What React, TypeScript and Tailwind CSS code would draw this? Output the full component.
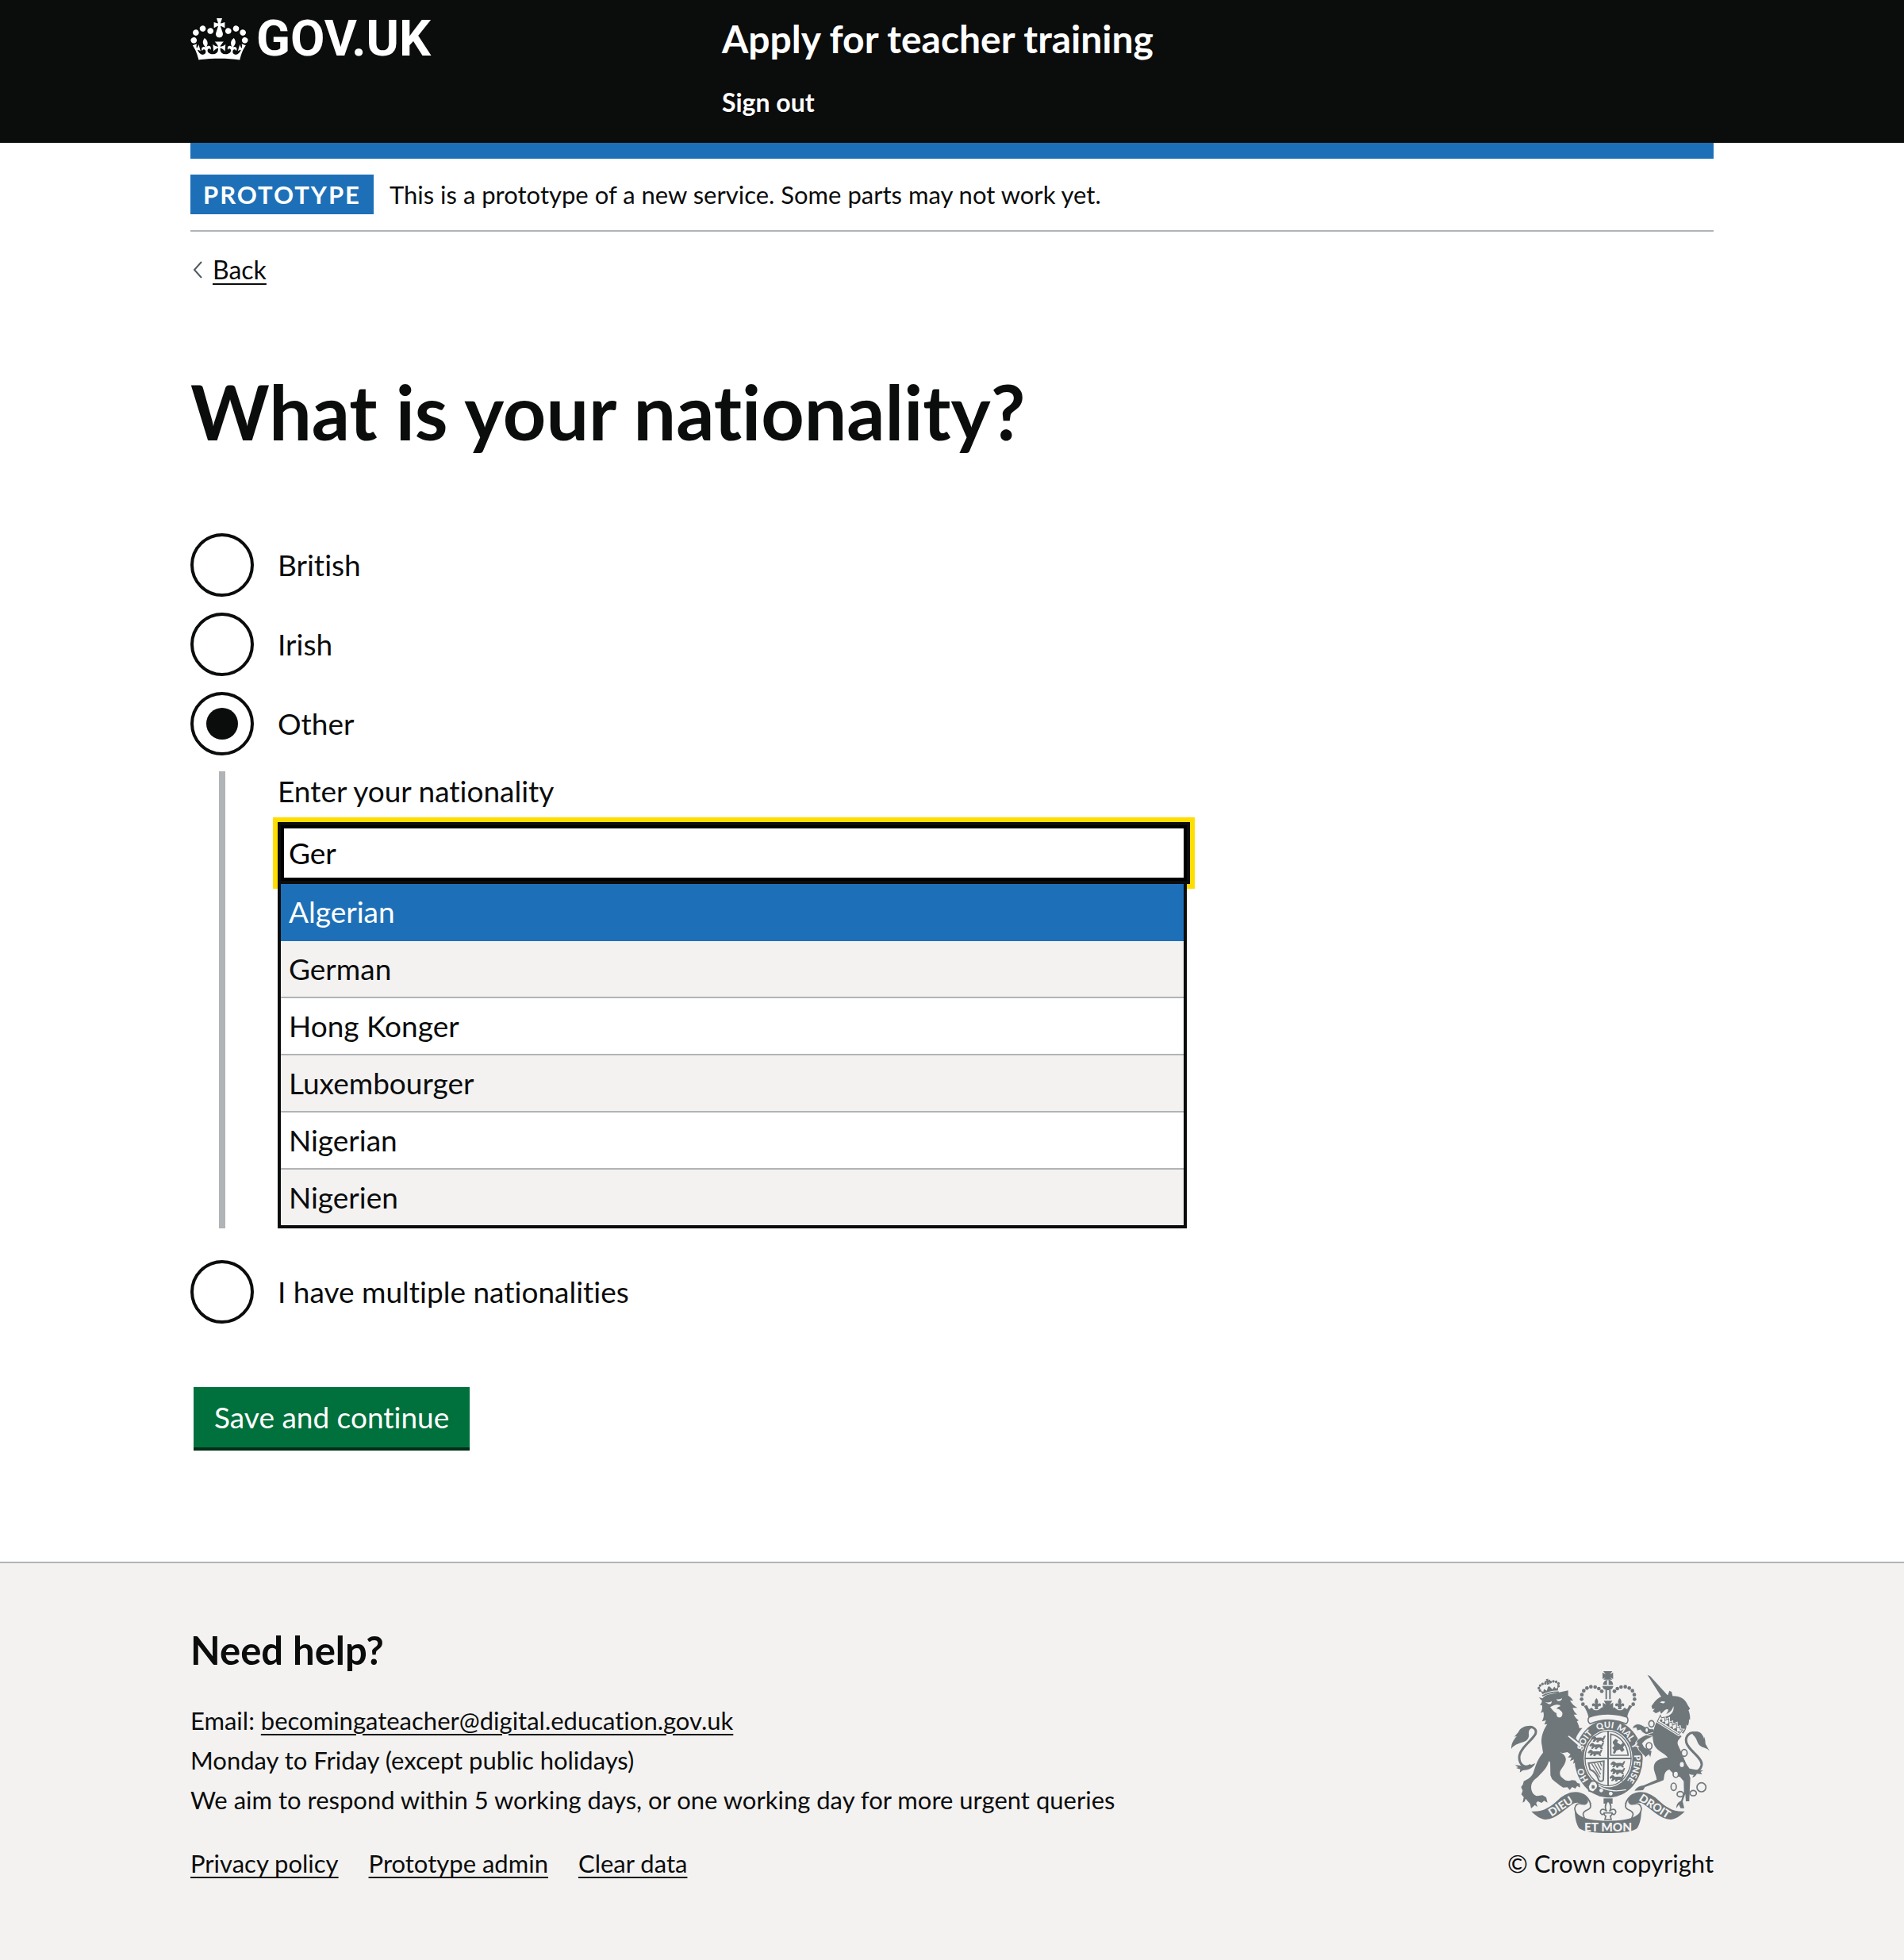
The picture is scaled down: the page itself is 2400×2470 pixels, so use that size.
import React, { useState } from "react";

const NATIONALITIES = ["Algerian", "German", "Hong Konger", "Luxembourger", "Nigerian", "Nigerien"];

const CROWN_PATH =
  "M25 30.2c3.5 1.5 7.7-.2 9.1-3.7 1.5-3.6-.2-7.8-3.9-9.2-3.6-1.4-7.6.3-9.1 3.9-1.4 3.5.3 7.5 3.9 9zM9 39.5c3.6 1.5 7.8-.2 9.2-3.7 1.5-3.6-.2-7.8-3.9-9.1-3.6-1.5-7.6.2-9.1 3.8-1.4 3.5.3 7.5 3.8 9zM4.4 57.2c3.5 1.5 7.7-.2 9.1-3.8 1.5-3.6-.2-7.7-3.9-9.1-3.5-1.5-7.6.3-9.1 3.8-1.4 3.5.3 7.6 3.9 9.1zm38.3-21.4c3.5 1.5 7.7-.2 9.1-3.8 1.5-3.6-.2-7.7-3.9-9.1-3.6-1.5-7.6.3-9.1 3.8-1.3 3.6.4 7.7 3.9 9.1zm64.4-5.6c-3.6 1.5-7.8-.2-9.1-3.7-1.5-3.6.2-7.8 3.8-9.2 3.6-1.4 7.7.3 9.2 3.9 1.3 3.5-.4 7.5-3.9 9zm15.9 9.3c-3.6 1.5-7.7-.2-9.1-3.7-1.5-3.6.2-7.8 3.7-9.1 3.6-1.5 7.7.2 9.2 3.8 1.5 3.5-.3 7.5-3.8 9zm4.7 17.7c-3.6 1.5-7.8-.2-9.2-3.8-1.5-3.6.2-7.7 3.9-9.1 3.6-1.5 7.7.3 9.2 3.8 1.3 3.5-.4 7.6-3.9 9.1zM89.3 35.8c-3.6 1.5-7.8-.2-9.2-3.8-1.4-3.6.2-7.7 3.9-9.1 3.6-1.5 7.7.3 9.2 3.8 1.4 3.6-.3 7.7-3.9 9.1zM69.7 17.7l8.9 4.7V9.3l-8.9 2.8c-.2-.3-.5-.6-.9-.9L72.4 0H59.6l3.5 11.2c-.3.3-.6.5-.9.9l-8.8-2.8v13.1l8.8-4.7c.3.3.6.7.9.9l-5 15.4v.1c-.2.8-.4 1.6-.4 2.4 0 4.1 3.1 7.5 7 8.1h.2c.3 0 .7.1 1 .1.4 0 .7 0 1-.1h.2c4-.6 7.1-4.1 7.1-8.1 0-.8-.1-1.7-.4-2.4V34l-5.1-15.4c.4-.2.7-.6 1-.9zM66 92.8c16.9 0 32.8 1.1 47.1 3.2 4-16.9 8.9-26.7 14-33.5l-9.6-3.4c1 4.9 1.1 7.2 0 10.2-1.5-1.4-3-4.3-4.2-8.7L108.6 76c2.8-2 5-3.2 7.5-3.3-4.4 9.4-10 11.9-13.6 11.2-4.3-.8-6.3-4.6-5.6-7.9 1-4.7 5.7-5.9 8-.5 4.3-8.7-3-11.4-7.6-8.8 7.1-7.2 7.9-13.5 2.1-21.1-8 6.1-8.1 12.3-4.5 20.8-4.7-5.4-12.1-2.5-9.5 6.2 3.4-5.2 7.9-2 7.2 3.1-.6 4.3-6.4 7.8-13.5 7.2-10.3-.9-10.9-8-11.2-13.8 2.5-.5 7.1 1.8 11 7.3L80.2 60c-4.1 4.4-8 5.3-12.3 5.4 1.4-4.4 8-11.6 8-11.6H55.5s6.4 7.2 7.9 11.6c-4.2-.1-8-1-12.3-5.4l1.4 16.4c3.9-5.5 8.5-7.7 10.9-7.3-.3 5.8-.9 12.8-11.1 13.8-7.2.6-12.9-2.9-13.5-7.2-.7-5 3.8-8.3 7.1-3.1 2.7-8.7-4.6-11.6-9.4-6.2 3.7-8.5 3.6-14.7-4.6-20.8-5.8 7.6-5 13.9 2.2 21.1-4.7-2.6-11.9.1-7.7 8.8 2.3-5.5 7.1-4.2 8.1.5.7 3.3-1.3 7.1-5.7 7.9-3.5.7-9-1.8-13.5-11.2 2.5.1 4.7 1.3 7.5 3.3l-4.7-15.4c-1.2 4.4-2.7 7.2-4.3 8.7-1.1-3-.9-5.3 0-10.2l-9.5 3.4c5 6.9 9.9 16.7 14 33.5 14.8-2.1 30.8-3.2 47.7-3.2z";

const CREST = "#6f777b";
const PAPER = "#f3f2f1";

/* Left half of the jewelled arch; the right half is mirrored about x = 408. */
const ARCH_JEWELS: [number, number][] = [
  [313, 173], [308, 154], [309, 137], [316, 122], [328, 112], [343, 107], [359, 108], [373, 114], [384, 124],
];

const LION_CROWN_JEWELS: [number, number][] = [
  [-36, 2], [-38, -8], [-31, -16], [-21, -20], [-10, -20], [10, -20], [21, -20], [31, -16], [38, -8], [36, 2],
];

const GARTER_WORDS: [string, string][] = [
  ["HO", "9%"], ["SOIT", "32%"], ["QUI", "48%"], ["MAL", "62%"], ["Y", "72%"], ["PENSE", "87%"],
];

function WalkingLion({ x, y }: { x: number; y: number }) {
  return (
    <path
      transform={`translate(${x} ${y})`}
      d="M2 4l6-4 6 3 4 4 16-1 10 2 2-7 5-2-2 6-3 6-3 5 4 5-7-1-2-5-10 1-3 6-6-1 3-6-6-1-5 6-6 0 4-7-3-4-4 3-4-3 3-2z"
      stroke={CREST}
      strokeWidth="3"
    />
  );
}

function Fleur({ x, y, s }: { x: number; y: number; s: number }) {
  return (
    <path
      transform={`translate(${x} ${y}) scale(${s})`}
      d="M0-22C8-13 8-6 3 2c5-7 15-6 14 2-1 6-6 6-8 2-1 3 0 5-4 6l2 8H-7l2-8c-4-1-3-3-4-6-2 4-7 4-8-2-1-8 9-9 14-2C-8-6-8-13 0-22z"
    />
  );
}

function RoyalArms() {
  return (
    <svg viewBox="42 48 750 612" className="h-[204px] w-[250px]" fill={CREST} role="img" aria-label="Royal coat of arms">
      {/* Garter */}
      <ellipse cx="410" cy="379" rx="129" ry="147" />

      {/* Lion supporter */}
      <path
        d="M116 403C92 418 72 400 72 374C72 340 124 308 134 284C140 264 118 254 100 262"
        fill="none" stroke={CREST} strokeWidth="9"
      />
      <path d="M120 257C98 251 76 262 69 278L53 296l10-3C46 312 42 325 42 342c8-14 26-20 46-26c14-5 22-14 20-30C107 272 113 264 126 262z" />
      <path d="M132 396c-16 8-34 14-60 8l-16-1 12 9-8 2 16 5-2 12 12-8c18-2 34-6 44-22z" />
      <path d="M313 258C290 276 279 300 276 330" fill="none" stroke={PAPER} strokeWidth="6" />
      <path
        d="M146 147L160 151C166 143 174 138 186 136L236 125L257 121V140C266 146 272 152 276 160L264 159C270 171 282 181 292 187L274 187C277 198 284 207 291 212L278 212C283 222 290 230 297 234L290 238C295 247 298 256 299 263L311 263C300 274 290 290 286 302L297 316L306 345C310 360 317 375 318 388L304 402C294 410 286 402 289 390L276 398L279 382L264 388L270 374L256 374L266 362L254 354L236 358L212 350C232 355 246 364 248 378C250 392 240 406 230 420C222 432 226 446 236 452C246 462 258 466 270 460L284 461L292 471L301 473L302 488L291 482L284 492L272 486L263 497L254 487L238 488C222 478 210 468 196 456L190 442L189 392L184 388C178 412 164 426 148 442C136 456 118 462 117 486C117 506 128 518 140 520L160 517L174 525L179 545L166 538L157 546L142 540L136 546L141 562L131 554L117 567L113 550L96 530L93 540L85 545L89 524L80 514L85 500L79 486L86 476L89 464C104 458 120 448 126 430C134 404 142 380 162 356L158 330C152 306 160 280 170 262L178 248L167 250L173 234L158 238C164 228 167 214 163 202L153 206C158 196 161 186 158 176L150 177C156 170 158 164 158 160Z"
      />
      <g fill={PAPER}>
        <path d="M169 164c10 4 20 2 26-3 0 10-6 13-13 11zM212 154c8 2 14 0 22-4-1 10-10 13-18 10zM189 184c8-4 16-9 26-9 8 0 14 3 12 6-7 2-12 4-14 9 6 2 8 0 12 4 8 6 12 10 10 18-1 7-6 11-11 11-8 0-12-7-11-16-9-4-16-12-24-23z" />
        <path d="M256 295l4-3 44 32 7 34-10-24z" />
      </g>
      <g transform="translate(185 111) rotate(-13)">
        {LION_CROWN_JEWELS.map(([x, y]) => (
          <circle key={`${x},${y}`} cx={x} cy={y} r="5" />
        ))}
        <path d="M-5-34H5L3-28l7-2v11l-7-3 3 9H-6l3-9-7 3v-11l7 2z" />
        <path d="M-34 4l9 6 5-10 9 9 8-14h6l8 14 9-9 5 10 9-6-4 14c-18-5-42-5-60 0z" />
        <path d="M-32 24c18-5 46-5 64 0" fill="none" stroke={CREST} strokeWidth="5" />
      </g>

      {/* Unicorn supporter */}
      <path
        d="M742 284C716 272 698 296 704 318C712 348 766 376 762 402C758 424 740 434 720 424"
        fill="none" stroke={CREST} strokeWidth="9"
      />
      <path d="M728 278c20-6 34 2 40 18l4 10-2-12c8 14 4 24 8 32l14 24c-12-14-24-10-36-20-12-8-10-28-28-42z" />
      <path d="M690 368c6 16 12 30 26 48l40 8 12-2-10 8 6 8-20-2c-4 8-10 14-18 14l6-10c-14 2-28-8-36-20z" />
      <path d="M557 62L567 67L634 140L610 146Z" />
      <path d="M612 143C598 148 586 158 578 172L572 180L576 192L585 190L577 199L588 207C594 206 602 202 604 198L608 210L622 196C630 190 634 192 636 194C630 212 618 222 604 226L692 284C702 272 706 258 704 250L710 254C714 244 714 238 714 230L718 232C719 218 716 206 712 196L718 190L710 178C700 154 684 142 652 142L648 126L640 122L634 138Z" />
      <path d="M604 166c6-5 14-5 20-2-4 7-12 7-20 2zM655 180c5 20-11 38-33 40-6 0-10-4-8-8 20 0 36-12 41-32z" fill={PAPER} />
      <path
        d="M500 266C502 250 518 244 532 250C546 256 556 268 580 266L584 296C562 292 540 286 530 270L518 274L514 262ZM586 294C566 300 548 306 538 322L546 336L574 350L568 378L562 364L550 374L524 346L512 318C522 300 552 286 578 280Z"
        stroke={PAPER} strokeWidth="3"
      />
      <path d="M594 230L686 294C676 306 668 312 672 326L690 366L702 396L712 430L719 452L717 490L715 540H702L700 512L690 540L696 566H682L676 552L666 566C666 552 672 544 684 538L695 505L694 464L680 448C664 446 652 434 640 420C626 424 622 434 620 446L618 460L604 466L548 486L540 498L508 500C516 488 526 482 542 480L592 458C590 440 580 426 581 410C582 386 604 378 634 374C620 356 592 350 582 326C576 306 574 284 584 258Z" />
      <g transform="translate(641 258) rotate(32)">
        <path d="M-53-18l9 6 8-8 8 10 9-14 9 14 8-10 8 10 9-14 9 14 8-10 8 8 8-4-3 24H-50z" fill={CREST} stroke={PAPER} strokeWidth="9" />
        <path d="M-53-18l9 6 8-8 8 10 9-14 9 14 8-10 8 10 9-14 9 14 8-10 8 8 8-4-3 24H-50z" fill={PAPER} stroke={CREST} strokeWidth="3" />
        <path d="M-44-6l6-2 5 8 7-8 8 9 9-12 9 12 8-9 8 9 9-12 9 12 7-7 3 4-2 4H-44z" />
      </g>
      <g fill={PAPER} stroke={CREST} strokeWidth="5">
        <ellipse cx="572" cy="247" rx="10" ry="12" />
        <ellipse cx="554" cy="271" rx="7" ry="10" />
        <ellipse cx="563" cy="331" rx="11" ry="13" />
        <ellipse cx="696" cy="357" rx="11" ry="13" />
        <ellipse cx="687" cy="401" rx="10" ry="12" />
        <ellipse cx="664" cy="438" rx="10" ry="12" />
        <ellipse cx="656" cy="485" rx="10" ry="14" />
        <ellipse cx="681" cy="513" rx="12" ry="10" />
        <ellipse cx="730" cy="509" rx="12" ry="10" />
        <circle cx="761" cy="487" r="17" />
      </g>

      {/* Crown */}
      <path d="M390 48h34l-9 12 12-7v25l-12-7 9 9h-34l9-9-12 7V53l12 7z" />
      <path d="M389 100a19 20 0 0 1 38 0zM386 104h42c-2 10-10 16-21 16s-19-6-21-16z" />
      <path d="M404 82h6v18h-6z" fill={PAPER} />
      <path d="M401 120v34M415 120v34" stroke={CREST} strokeWidth="6" />
      {ARCH_JEWELS.map(([x, y]) => (
        <React.Fragment key={`${x},${y}`}>
          <circle cx={x} cy={y} r="7" />
          <circle cx={816 - x} cy={y} r="7" />
        </React.Fragment>
      ))}
      <Fleur x={364} y={172} s={1} />
      <Fleur x={452} y={172} s={1} />
      <path d="M392 160h32l-9 14 12-7v25h-39v-25l12 7z" />
      <path d="M316 180l12-4 8 16 10-6 8 8c10 4 18 2 24-4l8-6 6 8h32l6-8 8 6c6 6 14 8 24 4l8-8 10 6 8-16 12 4c-10 12-16 24-20 42-48-14-98-14-146 0-4-18-10-30-18-42z" />
      <path d="M336 222c44-16 100-16 144 0 6 10 2 20-4 25-44-18-92-18-136 0-8-6-10-16-4-25z" fill={PAPER} stroke={CREST} strokeWidth="5" />

      {/* Shield */}
      <ellipse cx="408" cy="378" rx="92" ry="109" fill={PAPER} />
      <ellipse cx="408" cy="378" rx="87" ry="103" fill="none" stroke={CREST} strokeWidth="4" />
      <path d="M408 274v208M320 378h176" stroke={CREST} strokeWidth="6" />
      <path id="garter-line" d="M351 477A99 118 0 1 1 465 477" fill="none" />
      <g fill={PAPER} fontFamily="Lato, sans-serif" fontWeight="900" fontSize="33" textAnchor="middle">
        {GARTER_WORDS.map(([word, at]) => (
          <text key={word}>
            <textPath href="#garter-line" startOffset={at}>{word}</textPath>
          </text>
        ))}
      </g>
      <WalkingLion x={346} y={294} />
      <WalkingLion x={340} y={320} />
      <WalkingLion x={334} y={346} />
      <WalkingLion x={420} y={390} />
      <WalkingLion x={420} y={416} />
      <WalkingLion x={416} y={442} />
      <path d="M418 286c34 6 62 38 66 80h-66z" fill="none" stroke={CREST} strokeWidth="5" />
      <path d="M426 314l10-10 10 6-4 8 14 8 8-8 8 8-8 10 6 10-10 8-8-10-12 4-6 12-8-2 4-12-6-8 8-8-6-10z" />
      <path d="M334 396l58-8-2 70c-2 8-16 8-18 0-6-20-20-34-32-38z" fill="none" stroke={CREST} strokeWidth="6" />
      <path d="M346 398l32 52M356 396l24 42M368 396l14 26M378 394l6 12" stroke={CREST} strokeWidth="4" />
      <path d="M372 482c34 20 70 22 104 14" fill="none" stroke={PAPER} strokeWidth="4" />
      <g fill={PAPER}>
        <circle cx="382" cy="499" r="7" />
        <circle cx="418" cy="511" r="7" />
        <path d="M338 472c6-12 22-12 28 0 6 10 2 20-6 26l-8 8-16-6-4-16z" stroke={CREST} strokeWidth="6" />
      </g>
      <path d="M346 480c6-4 12 0 12 6s-8 8-12 4z" />

      {/* Fleur-de-lis pendant */}
      <path d="M391 529h34v20h-34z" />
      <g fill={PAPER} stroke={CREST} strokeWidth="3">
        <Fleur x={408} y={575} s={1.7} />
      </g>
      <path d="M394 584h28" stroke={CREST} strokeWidth="5" />

      {/* Motto ribbon */}
      <path d="M118 578C160 582 190 562 220 534C248 508 280 500 304 508C326 514 336 530 345 550L308 550C296 543 284 544 272 552C244 570 214 606 172 609C150 608 132 592 118 578Z" />
      <path d="M698 578C656 582 626 562 596 534C568 508 536 500 512 508C490 514 480 530 471 550L508 550C520 543 532 544 544 552C572 570 602 606 644 609C666 608 684 592 698 578Z" />
      <g fill={PAPER} stroke={CREST} strokeWidth="5">
        <path d="M308 514c20 6 34 24 34 46-2 16-24 10-28 26-2 10 6 16 6 22-20-8-38-20-38-42 2-12 10-20 26-16 12 4 22-2 22-10s-8-16-22-26z" />
        <path d="M508 514c-20 6-34 24-34 46 2 16 24 10 28 26 2 10-6 16-6 22 20-8 38-20 38-42-2-12-10-20-26-16-12 4-22-2-22-10s8-16 22-26z" />
      </g>
      <path d="M282 572c8 28 56 42 126 42s118-14 126-42c0 24-4 52-16 70-20 14-60 18-110 18s-90-4-110-18c-12-18-16-46-16-70z" />
      <g fill={PAPER} fontFamily="Lato, sans-serif" fontWeight="900" textAnchor="middle">
        <text x="408" y="653" fontSize="46">ET MON</text>
        <text transform="translate(236 571) rotate(-33)" fontSize="42">DIEU</text>
        <text transform="translate(577 571) rotate(33)" fontSize="42">DROIT</text>
      </g>
    </svg>
  );
}

const LINK = "underline decoration-2 underline-offset-[5px]";

function Radio({ id, label, checked, onSelect }: { id: string; label: string; checked: boolean; onSelect: (id: string) => void }) {
  return (
    <div className="flex items-center">
      <input
        type="radio"
        id={id}
        name="nationality"
        checked={checked}
        onChange={() => onSelect(id)}
        className="grid size-20 shrink-0 appearance-none place-content-center rounded-full border-4 border-[#0b0c0c] bg-white before:size-10 before:rounded-full checked:before:bg-[#0b0c0c]"
      />
      <label htmlFor={id} className="pl-[30px] text-[37px] leading-[50px]">
        {label}
      </label>
    </div>
  );
}

export default function App() {
  const [choice, setChoice] = useState("other");
  const [query, setQuery] = useState("Ger");

  return (
    <div className="flex min-h-screen flex-col bg-white font-['Lato',sans-serif] text-[31px] leading-[50px] text-[#0b0c0c] [font-variant-ligatures:none]">
      <header className="bg-[#0b0c0c] text-white">
        <div className="mx-auto grid w-4/5 max-w-[1920px] grid-cols-[1fr_2fr] pt-[19px] pb-[31px]">
          <a href="#" className="flex items-center gap-[10px] self-start font-['Roboto',sans-serif] text-[63px] leading-[60px] font-bold">
            <svg viewBox="0 0 132 97" className="h-[53px] w-[73px]" fill="currentColor" aria-hidden="true">
              <path fillRule="evenodd" d={CROWN_PATH} />
            </svg>
            GOV.UK
          </a>
          <div className="pl-[30px] font-bold">
            <a href="#" className="block text-[48px] leading-[60px]">Apply for teacher training</a>
            <nav className="mt-[30px] text-[32px] leading-10">
              <a href="#">Sign out</a>
            </nav>
          </div>
        </div>
      </header>

      <div className="mx-auto w-4/5 max-w-[1920px]">
        <div className="h-5 bg-[#1d70b8]" />
        <div className="flex items-center gap-5 border-b-2 border-[#b1b4b6] py-5">
          <strong className="bg-[#1d70b8] px-4 tracking-[2px] text-white">PROTOTYPE</strong>
          <span>This is a prototype of a new service. Some parts may not work yet.</span>
        </div>

        <a href="#" className="mt-7 flex w-fit items-center gap-[13px] pl-[3px] text-[32px] leading-10">
          <svg viewBox="0 0 12 22" className="h-[22px] w-3" fill="none" stroke="#505a5f" strokeWidth="2" aria-hidden="true">
            <path d="M11 1L2 11l9 10" />
          </svg>
          <span className={LINK}>Back</span>
        </a>

        <main className="w-2/3 pt-[108px] pr-5">
          <form onSubmit={(e) => e.preventDefault()}>
            <fieldset>
              <legend className="mb-[104px]">
                <h1 className="text-[95px] leading-[100px] font-bold">What is your nationality?</h1>
              </legend>
              <div className="flex flex-col gap-5">
                <Radio id="british" label="British" checked={choice === "british"} onSelect={setChoice} />
                <Radio id="irish" label="Irish" checked={choice === "irish"} onSelect={setChoice} />
                <Radio id="other" label="Other" checked={choice === "other"} onSelect={setChoice} />
                <div className="mb-5 ml-9 border-l-8 border-[#b1b4b6] pl-[66px] text-[37px]">
                  <label htmlFor="nationality-text" className="block">Enter your nationality</label>
                  <input
                    id="nationality-text"
                    type="text"
                    value={query}
                    onChange={(e) => setQuery(e.target.value)}
                    className="mt-[14px] block h-[78px] w-full border-4 border-[#0b0c0c] bg-white px-[10px] pb-[2px] text-black shadow-[inset_0_0_0_4px_#000] outline-[6px] outline-[#ffdd00] outline-solid"
                  />
                  <ul role="listbox" aria-label="Nationalities" className="relative mr-1 border-4 border-t-0 border-[#0b0c0c] bg-white">
                    {NATIONALITIES.map((name, i) => (
                      <li
                        key={name}
                        role="option"
                        aria-selected={i === 0}
                        className="border-b-2 border-[#b1b4b6] px-[10px] leading-[70px] last:border-b-0 even:bg-[#f3f2f1] aria-selected:border-[#1d70b8] aria-selected:bg-[#1d70b8] aria-selected:text-white"
                      >
                        {name}
                      </li>
                    ))}
                  </ul>
                </div>
                <Radio id="multiple" label="I have multiple nationalities" checked={choice === "multiple"} onSelect={setChoice} />
              </div>
            </fieldset>
            <button type="submit" className="mt-20 ml-1 block border-b-4 border-[#002d18] bg-[#00703c] px-[26px] text-[37px] leading-[76px] text-white">
              Save and continue
            </button>
          </form>
        </main>
      </div>

      <footer className="mt-[140px] grow border-t-2 border-[#b1b4b6] bg-[#f3f2f1] pt-[79px] pb-[92px]">
        <div className="mx-auto flex w-4/5 max-w-[1920px] items-end justify-between">
          <div>
            <h2 className="mb-[34px] text-[49px] leading-[60px] font-bold">Need help?</h2>
            <p>
              Email: <a href="mailto:becomingateacher@digital.education.gov.uk" className={LINK}>becomingateacher@digital.education.gov.uk</a>
            </p>
            <p>Monday to Friday (except public holidays)</p>
            <p>We aim to respond within 5 working days, or one working day for more urgent queries</p>
            <nav className="mt-[30px] flex gap-[38px]">
              <a href="#" className={LINK}>Privacy policy</a>
              <a href="#" className={LINK}>Prototype admin</a>
              <a href="#" className={LINK}>Clear data</a>
            </nav>
          </div>
          <a href="#" className="flex flex-col items-center gap-[13px]">
            <RoyalArms />
            <span>© Crown copyright</span>
          </a>
        </div>
      </footer>
    </div>
  );
}
